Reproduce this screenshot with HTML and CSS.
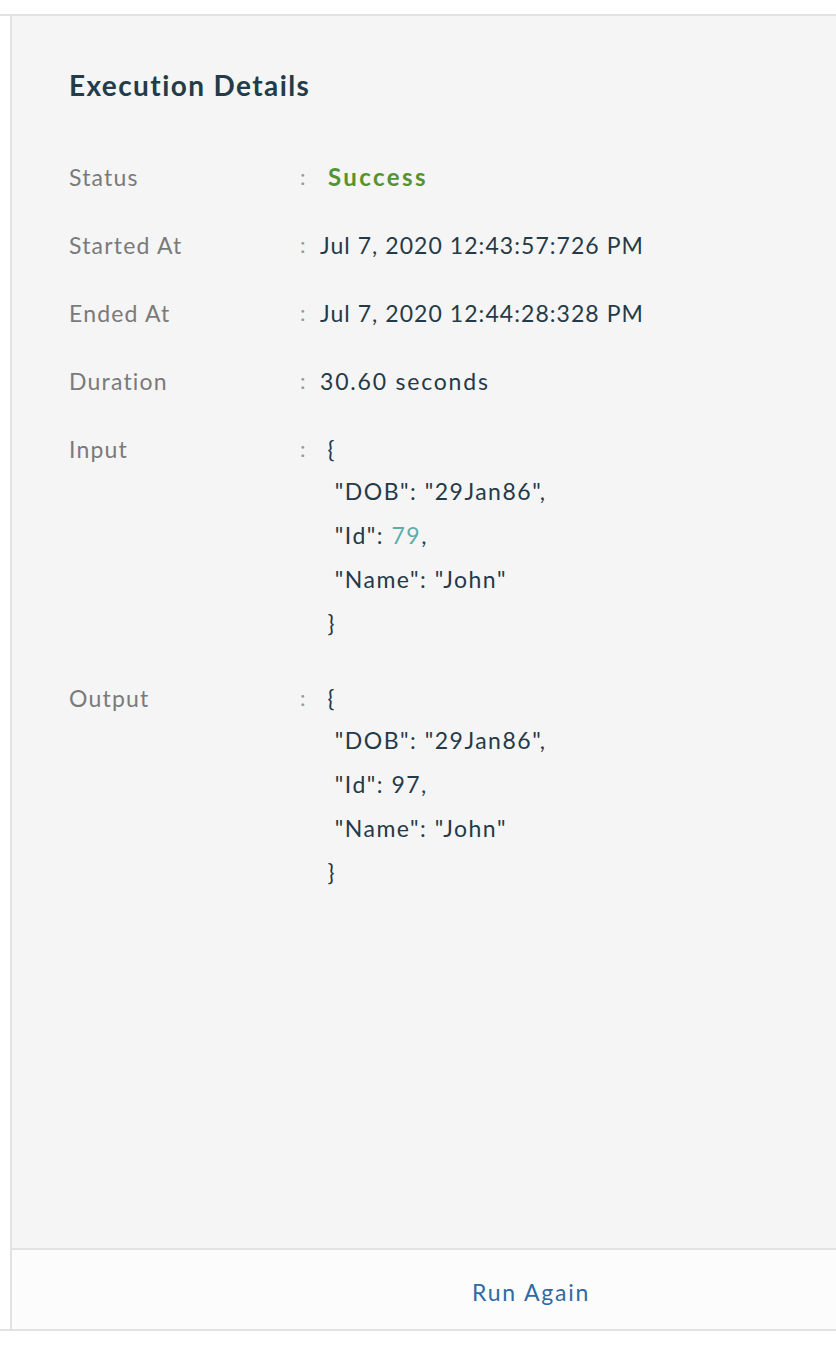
FILE: index.html
```html
<!DOCTYPE html>
<html>
<head>
<meta charset="utf-8">
<link rel="stylesheet" href="styles.css">
</head>
<body>
<div class="frame">
  <div class="panel">
    <div class="main">
      <h2 class="title">Execution Details</h2>
      <div class="row">
        <div class="label">Status</div>
        <div class="colon">:</div>
        <div class="value success">Success</div>
      </div>
      <div class="row">
        <div class="label">Started At</div>
        <div class="colon">:</div>
        <div class="value date">Jul 7, 2020 12:43:57:726 PM</div>
      </div>
      <div class="row">
        <div class="label">Ended At</div>
        <div class="colon">:</div>
        <div class="value date">Jul 7, 2020 12:44:28:328 PM</div>
      </div>
      <div class="row">
        <div class="label">Duration</div>
        <div class="colon">:</div>
        <div class="value">30.60 seconds</div>
      </div>
      <div class="row row-json">
        <div class="label">Input</div>
        <div class="colon">:</div>
        <div class="value json"><div class="jl first"> {</div><div class="jl">  "DOB": "29Jan86",</div><div class="jl">  "Id": <span class="num">79</span>,</div><div class="jl">  "Name": "John"</div><div class="jl"> }</div></div>
      </div>
      <div class="row">
        <div class="label">Output</div>
        <div class="colon">:</div>
        <div class="value json"><div class="jl first"> {</div><div class="jl">  "DOB": "29Jan86",</div><div class="jl">  "Id": 97,</div><div class="jl">  "Name": "John"</div><div class="jl"> }</div></div>
      </div>
    </div>
    <div class="footer">
      <span class="run">Run Again</span>
    </div>
  </div>
</div>
</body>
</html>
```

FILE: styles.css
```css
html, body {
  margin: 0;
  padding: 0;
  background: #ffffff;
}
body {
  font-family: Lato, "Open Sans", sans-serif;
  color: #243a48;
}
.frame {
  margin-top: 14px;
  border-top: 2px solid #e2e2e2;
  border-bottom: 2px solid #e2e2e2;
}
.panel {
  margin-left: 10px;
  border-left: 2px solid #e2e2e2;
  background: #f5f5f5;
  height: 1313px;
  display: flex;
  flex-direction: column;
}
.main {
  flex: 1;
  padding: 51px 0 0 57px;
}
.title {
  margin: 0 0 52px 0;
  font-size: 28px;
  line-height: 36px;
  font-weight: 700;
  letter-spacing: 1.4px;
  color: #243b4a;
}
.row {
  display: grid;
  grid-template-columns: 231px 20px 1fr;
  font-size: 23px;
  line-height: 44px;
  margin-bottom: 24px;
}
.row-json {
  margin-bottom: 31px;
}
.label {
  color: #7a7a7a;
  letter-spacing: 1.2px;
}
.colon {
  color: #8e9ba4;
  font-size: 22px;
}
.value {
  color: #253a48;
  letter-spacing: 1.8px;
}
.value.date {
  letter-spacing: 1.05px;
}
.success {
  color: #559330;
  font-weight: 700;
  font-size: 24px;
  letter-spacing: 2.4px;
  padding-left: 8px;
}
.json {
  white-space: pre;
  letter-spacing: 1.5px;
}
.jl {
  line-height: 44px;
}
.jl.first {
  line-height: 40px;
  margin-top: 2px;
  margin-bottom: 0;
}
.num {
  color: #5aaea9;
}
.row:last-child {
  margin-bottom: 0;
}
.footer {
  height: 79px;
  border-top: 2px solid #e2e2e2;
  background: #fcfcfc;
  display: flex;
  align-items: center;
  padding-left: 460px;
}
.run {
  font-size: 23px;
  letter-spacing: 1.8px;
  color: #2f6aa6;
  margin-top: 5px;
}
```
